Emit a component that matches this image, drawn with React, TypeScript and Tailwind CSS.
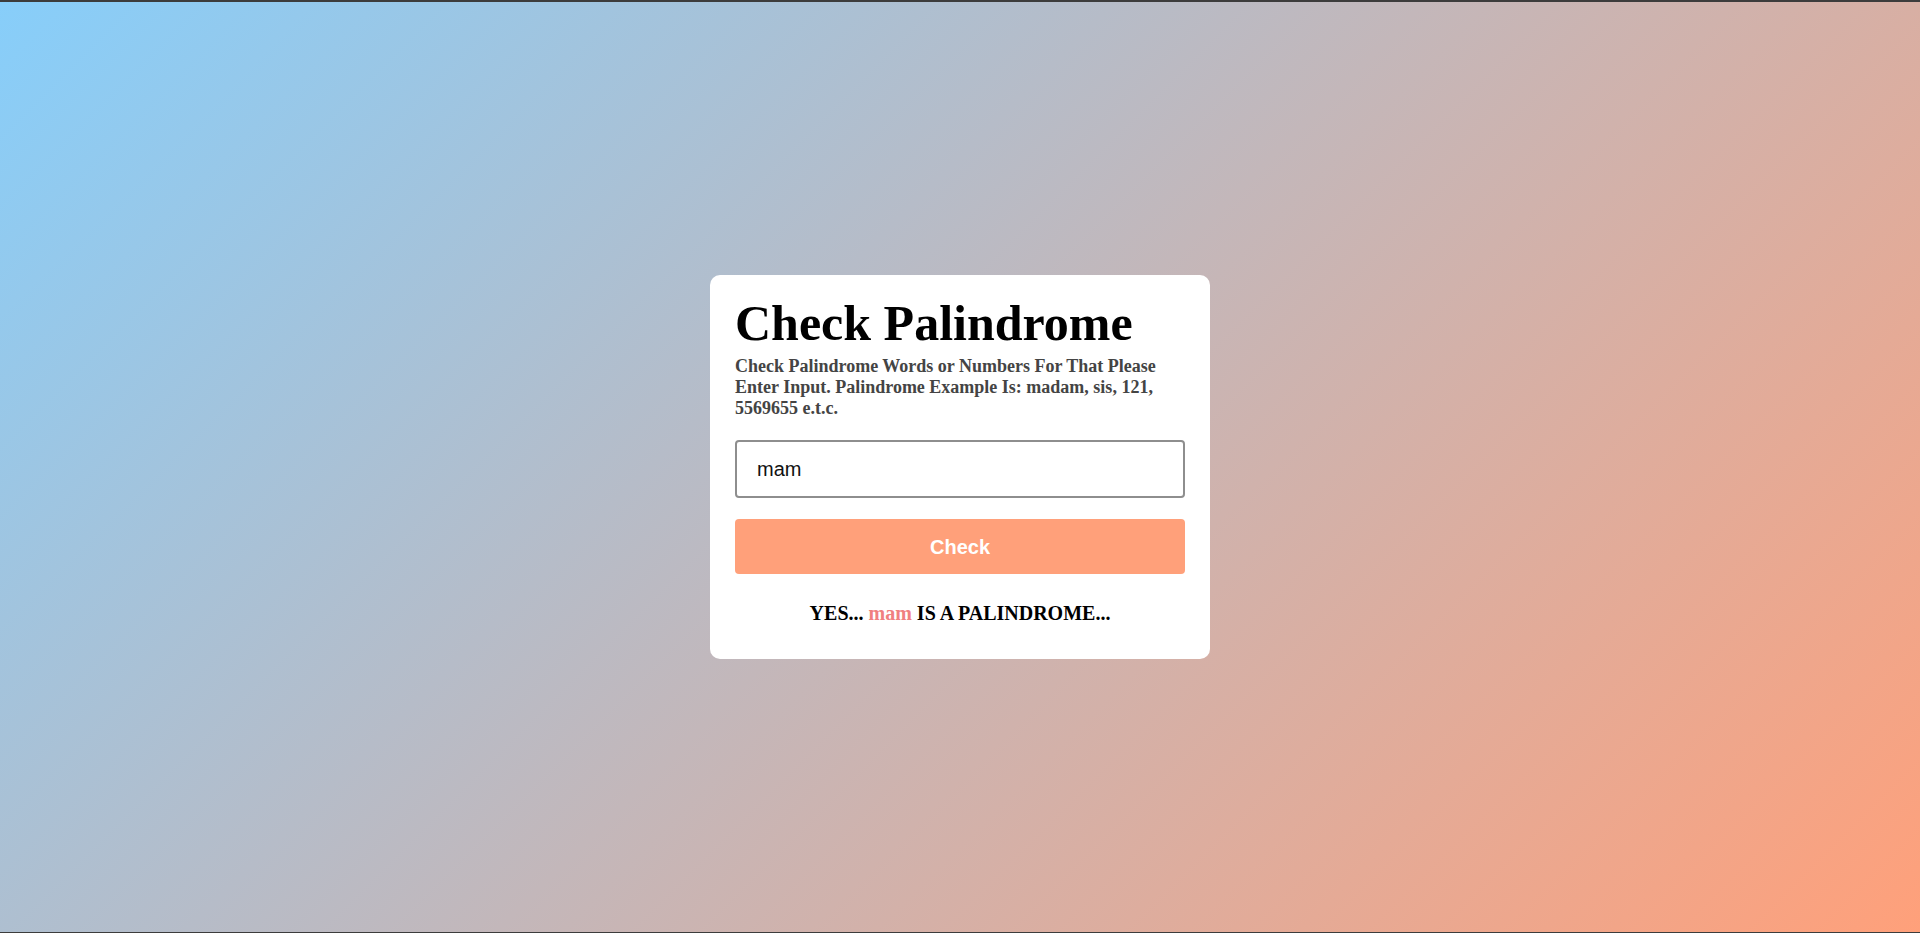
import { useState } from 'react';

export default function App() {
  const [value, setValue] = useState('mam');
  const [result, setResult] = useState<{ word: string; ok: boolean } | null>({ word: 'mam', ok: true });

  function handleCheck() {
    const clean = value.trim().toLowerCase();
    if (!clean) {
      setResult(null);
      return;
    }
    setResult({ word: value.trim(), ok: clean === clean.split('').reverse().join('') });
  }

  return (
    <div className="h-[933px] w-full border-t-2 border-b border-[#3c3c3c] bg-[linear-gradient(135deg,#87cefa,#ffa07a)] flex items-center justify-center">
      <div className="w-[500px] bg-white rounded-[10px] px-[25px] pt-[20px] pb-[34px] font-['Liberation_Serif',serif]">
        <h1 className="text-[50px] font-bold text-black leading-[1.15]">Check Palindrome</h1>
        <p className="mt-[4px] text-[18px] font-bold leading-[21px] text-[#444]">
          Check Palindrome Words or Numbers For That Please Enter Input. Palindrome Example Is: madam, sis, 121, 5569655 e.t.c.
        </p>
        <input
          type="text"
          value={value}
          onChange={e => setValue(e.target.value)}
          className="mt-[21px] w-full h-[58px] px-[20px] border-2 border-[#8e8e8e] rounded-[4px] text-[20px] text-[#111] font-['Liberation_Sans',sans-serif] outline-none"
        />
        <button
          type="button"
          onClick={handleCheck}
          className="mt-[21px] w-full h-[55px] rounded-[4px] bg-[#ffa07a] text-white text-[20px] font-bold font-['Liberation_Sans',sans-serif] cursor-pointer"
        >
          Check
        </button>
        {result && (
          <p className="mt-[28px] text-center text-[20px] font-bold text-black leading-[23px]">
            {result.ok ? 'YES... ' : 'NO... '}
            <span className="text-[#f08080]">{result.word}</span>
            {result.ok ? ' IS A PALINDROME...' : ' IS NOT A PALINDROME...'}
          </p>
        )}
      </div>
    </div>
  );
}
